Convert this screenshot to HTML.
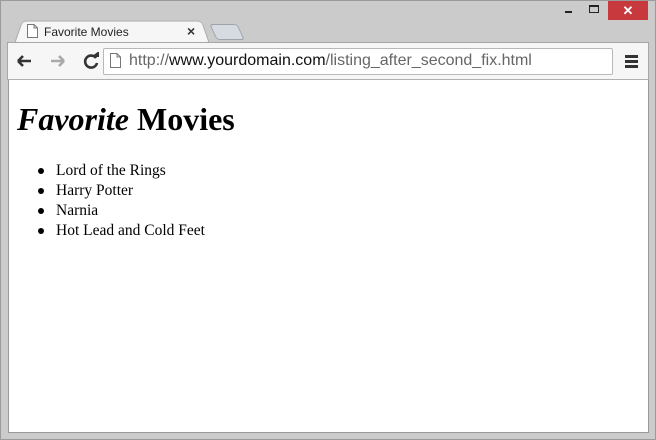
<!DOCTYPE html>
<html><head><style>
*{box-sizing:border-box}
body{margin:0;width:656px;height:440px;background:#cbcbcb;position:relative;overflow:hidden;font-family:"Liberation Sans",sans-serif}
.outer{position:absolute;inset:0;border:1px solid #9a9a9a}
.tab{position:absolute;left:14px;top:18px;width:196px;height:26px;background:#f6f6f6;border:1px solid #a8a8a8;border-bottom:none;border-radius:5px 5px 0 0;transform:perspective(60px) rotateX(12deg);transform-origin:bottom}
.tabtext{position:absolute;left:44px;top:25px;font-size:12px;color:#222}
.tabx{position:absolute;left:187px;top:23px;font-size:14px;font-weight:bold;color:#333}
.newtab{position:absolute;left:213px;top:24px;width:28px;height:16px;background:#d6dbe2;border:1px solid #9ea3aa;border-radius:3px;transform:skewX(25deg)}
.toolbar{position:absolute;left:7px;top:42px;width:642px;height:38px;background:#f6f6f6;border:1px solid #a8a8a8;border-bottom:1px solid #b0b0b0}
.url{position:absolute;left:103px;top:48px;width:510px;height:27px;background:#fff;border:1px solid #b8b8b8;border-radius:2px}
.urltext{position:absolute;left:129px;top:52px;font-size:16px;color:#666;white-space:nowrap}
.urltext b{font-weight:normal;color:#111}
.page{position:absolute;left:8px;top:80px;width:641px;height:353px;background:#fff;border-left:1px solid #999;border-right:1px solid #999;border-bottom:1px solid #999;font-family:"Liberation Serif",serif;padding:0 8px}
h1{font-size:32px;margin:21px 0 23px;line-height:37px}
ul{margin:0;padding-left:39px;font-size:15.5px;list-style:none}
li{line-height:20px;position:relative}
li::before{content:"";position:absolute;left:-18px;top:7px;width:6px;height:6px;border-radius:50%;background:#000}
.close{position:absolute;left:608px;top:1px;width:40px;height:19px;background:#c7393d;color:#fff;text-align:center;font-size:13px;line-height:19px;font-weight:bold}
</style></head><body>
<div class="outer"></div>
<div class="close">✕</div>
<div style="position:absolute;left:565px;top:11px;width:7px;height:2px;background:#222"></div>
<div style="position:absolute;left:589px;top:5px;width:10px;height:8px;border:1px solid #222;border-top-width:2px"></div>
<div class="tab"></div>
<svg style="position:absolute;left:27px;top:24px" width="11" height="14"><path d="M.5 .5H7L10.5 4V13.5H.5Z M7 .5V4H10.5" fill="#fff" stroke="#777"/></svg>
<div class="tabtext">Favorite Movies</div>
<div class="tabx">×</div>
<div class="newtab"></div>
<div class="toolbar"></div>
<svg style="position:absolute;left:15px;top:52px" width="90" height="18">
<path d="M3 9H16M3 9L8 4M3 9L8 14" stroke="#333" stroke-width="2.6" fill="none"/>
<path d="M36 9H49M49 9L44 4M49 9L44 14" stroke="#aaa" stroke-width="2.6" fill="none"/>
<path d="M81 6A6 6 0 1 0 82 11" stroke="#333" stroke-width="2.6" fill="none"/><path d="M76 5H84V-1Z" fill="#333"/>
</svg>
<div class="url"></div>
<svg style="position:absolute;left:110px;top:53px" width="11" height="15"><path d="M.5 .5H7L10.5 4V14.5H.5Z M7 .5V4H10.5" fill="#fff" stroke="#777"/></svg>
<div class="urltext">http://<b>www.yourdomain.com</b>/listing_after_second_fix.html</div>
<div style="position:absolute;left:625px;top:55px;width:13px;height:3px;background:#333;box-shadow:0 5px #333,0 10px #333"></div>
<div class="page">
<h1><i>Favorite</i> Movies</h1>
<ul><li>Lord of the Rings</li><li>Harry Potter</li><li>Narnia</li><li>Hot Lead and Cold Feet</li></ul>
</div>
</body></html>
